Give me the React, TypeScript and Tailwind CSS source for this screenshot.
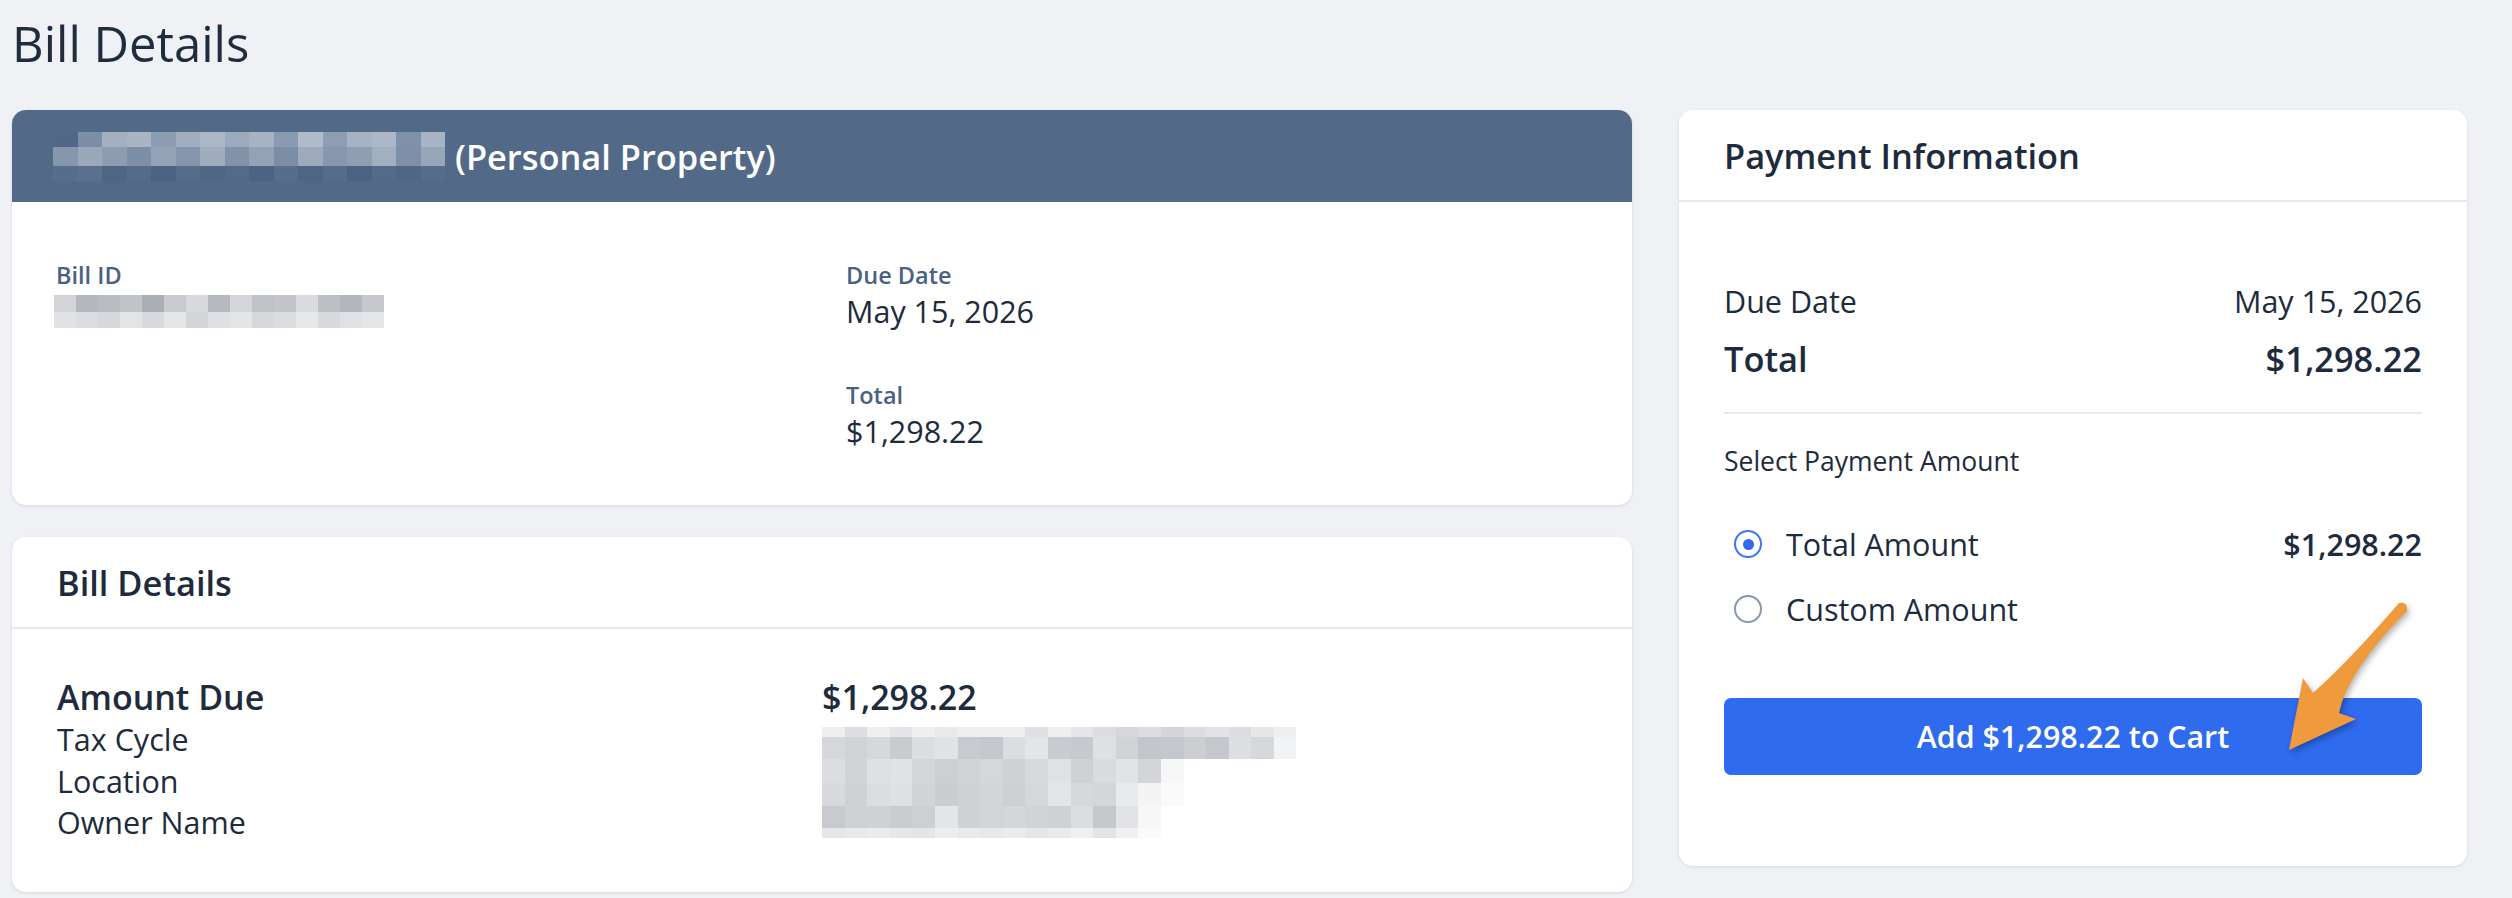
import React from "react";

const font = { fontFamily: '"Open Sans", "Noto Sans", sans-serif' };

function Blur({
  rows,
  cell,
  cellH,
}: {
  rows: string[][];
  cell: number;
  cellH: number[];
}) {
  return (
    <div className="flex flex-col">
      {rows.map((r, i) => (
        <div key={i} className="flex">
          {r.map((c, j) => (
            <div key={j} style={{ width: cell, height: cellH[i], background: c }} />
          ))}
        </div>
      ))}
    </div>
  );
}

const headerBlur = [
  ["#51688a", "#7d8fa6", "#a3b0c1", "#a9b5c5", "#8c9cb1", "#a1aec0", "#abb7c6", "#9babbd", "#a7b3c3", "#8a9ab0", "#b0bbc9", "#8e9db2", "#a7b3c4", "#acb8c7", "#7f91a8", "#a8b4c4"],
  ["#8597ad", "#9aa8ba", "#8c9cb1", "#7d8fa7", "#94a3b7", "#8495ac", "#9fadbf", "#8192a9", "#93a2b6", "#7c8ea6", "#9caabc", "#8797ad", "#8f9eb3", "#a2afc0", "#7e90a7", "#98a6b9"],
  ["#566d8b", "#5a708d", "#4e6584", "#546b89", "#4b6282", "#566c8a", "#4f6685", "#536a88", "#4c6383", "#576d8b", "#4e6584", "#556c8a", "#4b6282", "#536a88", "#4f6685", "#566c8a"],
];

const billIdBlur = [
  ["#d2d4d8", "#b4b7bd", "#b9bcc2", "#c0c3c8", "#a9adb4", "#c8cacf", "#d9dadd", "#b6b9bf", "#d5d6da", "#bfc2c7", "#c3c5ca", "#dadbde", "#bcbfc4", "#b3b6bc", "#c6c8cd"],
  ["#e1e2e5", "#dcdde0", "#d6d8db", "#e3e4e6", "#d9dadd", "#e6e7e9", "#d2d4d7", "#dfe0e3", "#e4e5e7", "#d5d7da", "#dbdcdf", "#e7e8ea", "#d8d9dc", "#e0e1e4", "#e5e6e8"],
];

const detailsBlur1 = [
  ["#eceef0", "#dcdee1", "#eeeff1", "#e4e5e8", "#eeeff1", "#e8e9eb", "#eeeff1", "#eceef0", "#eeeff1", "#dfe0e3", "#eeeff1", "#e5e6e9", "#dcdde0", "#d6d7db", "#dcdde0", "#d3d5d8", "#dcdde0", "#e2e3e6", "#dcdde0", "#e6e7e9", "#eeeff1"],
  ["#d5d7da", "#d1d3d7", "#d6d8db", "#c9cbcf", "#dcdde0", "#e1e2e5", "#c8cacf", "#c5c8cc", "#dcdde0", "#e4e5e8", "#c9cbd0", "#c6c9cd", "#dfe0e3", "#d1d3d7", "#c3c6cb", "#c4c7cb", "#ccced2", "#c5c7cc", "#dedfe2", "#d6d8db", "#f2f3f4"],
];
const detailsBlur2 = [
  ["#dcdde0", "#d1d3d7", "#dfe0e3", "#e1e2e5", "#d4d6d9", "#cdcfd3", "#d1d3d7", "#d5d7da", "#cfd1d5", "#d8d9dc", "#e0e1e4", "#cfd1d5", "#dadbde", "#e2e3e6", "#d3d5d8", "#f6f6f7"],
  ["#d8d9dc", "#cfd1d5", "#dcdde0", "#dfe0e3", "#d1d3d7", "#cbcdd1", "#cfd1d5", "#d2d4d7", "#cdcfd3", "#d5d7da", "#e4e5e8", "#d6d8db", "#d4d6d9", "#e9eaec", "#f4f4f5", "#fafafa"],
];
const detailsBlur3 = [
  ["#c8cacf", "#cfd1d5", "#d0d2d6", "#caccd0", "#cdcfd3", "#e4e5e7", "#cfd1d5", "#d2d4d7", "#d5d6da", "#d1d3d7", "#cfd1d5", "#dcdde0", "#c6c8cd", "#e2e3e5", "#f7f7f8"],
  ["#e6e7e9", "#e8e9eb", "#eaebed", "#e6e7e9", "#e4e5e7", "#ecedef", "#e9eaec", "#e7e8ea", "#ebeced", "#e6e7e9", "#e9eaec", "#eeeff0", "#e3e4e6", "#f0f0f2", "#fafafa"],
];

export default function App() {
  return (
    <div
      className="relative w-[2512px] h-[898px] overflow-hidden bg-[#eff1f5] px-[12px] text-[#1e2b3c]"
      style={font}
    >
      <div className="pt-[10px] text-[49px] leading-[66px] text-[#1f2c3d]">Bill Details</div>

      <div className="mt-[34px] flex items-start gap-[47px]">
        {/* Left column */}
        <div className="flex w-[1620px] flex-col gap-[32px]">
          {/* Card 1 */}
          <div className="overflow-hidden rounded-[14px] bg-white shadow-[0_1px_3px_rgba(30,40,60,0.12)]">
            <div className="flex h-[92px] items-center bg-[#526a87] pl-[41px]">
              <Blur rows={headerBlur} cell={24.5} cellH={[15, 19, 15]} />
              <span className="ml-[10px] text-[34.4px] font-semibold leading-[45px] text-white">
                (Personal Property)
              </span>
            </div>
            <div className="grid grid-cols-2 gap-[48px] px-[44px] pb-[54px] pt-[57px]">
              <div className="flex flex-col">
                <div className="text-[23.5px] font-semibold leading-[32px] text-[#4a6184]">Bill ID</div>
                <div className="mt-[4px] -ml-[2px]">
                  <Blur rows={billIdBlur} cell={22} cellH={[17, 16]} />
                </div>
              </div>
              <div className="flex flex-col">
                <div className="text-[23.5px] font-semibold leading-[32px] text-[#4a6184]">Due Date</div>
                <div className="text-[30.5px] leading-[40px]">May 15, 2026</div>
                <div className="mt-[48px] text-[23.5px] font-semibold leading-[32px] text-[#4a6184]">Total</div>
                <div className="text-[30.5px] leading-[40px]">$1,298.22</div>
              </div>
            </div>
          </div>

          {/* Card 2 */}
          <div className="overflow-hidden rounded-[14px] bg-white shadow-[0_1px_3px_rgba(30,40,60,0.12)]">
            <div className="flex h-[92px] items-center border-b-2 border-[#e6e9ef] px-[45px]">
              <span className="text-[34.4px] font-semibold leading-[45px]">Bill Details</span>
            </div>
            <div className="grid grid-cols-2 px-[45px] pb-[48px] pt-[46px]">
              <div className="flex flex-col">
                <div className="text-[34px] font-semibold leading-[44px]">Amount Due</div>
                <div className="text-[30.5px] leading-[41.5px]">Tax Cycle</div>
                <div className="text-[30.5px] leading-[41.5px]">Location</div>
                <div className="text-[30.5px] leading-[41.5px]">Owner Name</div>
              </div>
              <div className="flex flex-col">
                <div className="text-[34px] font-semibold leading-[44px]">$1,298.22</div>
                <div className="mt-[8px]">
                  <Blur rows={detailsBlur1} cell={22.6} cellH={[10, 22]} />
                  <Blur rows={detailsBlur2} cell={22.6} cellH={[24, 23]} />
                  <Blur rows={detailsBlur3} cell={22.6} cellH={[22, 10]} />
                </div>
              </div>
            </div>
          </div>
        </div>

        {/* Right card */}
        <div className="w-[788px] overflow-hidden rounded-[14px] bg-white shadow-[0_1px_3px_rgba(30,40,60,0.12)]">
          <div className="flex h-[92px] items-center border-b-2 border-[#e6e9ef] px-[45px]">
            <span className="text-[34.4px] font-semibold leading-[45px]">Payment Information</span>
          </div>
          <div className="flex flex-col px-[45px] pb-[91px] pt-[79px]">
            <div className="flex justify-between text-[30.5px] leading-[40px]">
              <span>Due Date</span>
              <span>May 15, 2026</span>
            </div>
            <div className="mt-[16px] flex justify-between text-[34.4px] font-semibold leading-[44px]">
              <span>Total</span>
              <span>$1,298.22</span>
            </div>
            <div className="mt-[31px] h-[2px] bg-[#e6e9ef]" />
            <div className="mt-[30px] text-[26.5px] leading-[34px]">Select Payment Amount</div>
            <div className="mt-[46px] flex items-center justify-between">
              <div className="flex items-center">
                <div className="ml-[10px] flex h-[28px] w-[28px] items-center justify-center rounded-full border-[2.5px] border-[#3b76f6]">
                  <div className="h-[11px] w-[11px] rounded-full bg-[#2f6bef]" />
                </div>
                <span className="ml-[24px] text-[30.5px] leading-[40px]">Total Amount</span>
              </div>
              <span className="text-[30.5px] font-semibold leading-[40px]">$1,298.22</span>
            </div>
            <div className="mt-[25px] flex items-center">
              <div className="ml-[10px] h-[28px] w-[28px] rounded-full border-2 border-[#8797b0]" />
              <span className="ml-[24px] text-[30.5px] leading-[40px]">Custom Amount</span>
            </div>
            <button className="mt-[69px] flex h-[77px] items-center justify-center rounded-[7px] bg-[#2f6bef] text-[30.4px] font-semibold text-white">
              Add $1,298.22 to Cart
            </button>
          </div>
        </div>
      </div>

      {/* Orange annotation arrow */}
      <svg
        className="absolute left-[2270px] top-[590px] drop-shadow-[2px_3px_3px_rgba(0,0,0,0.3)]"
        width="160"
        height="180"
        viewBox="0 0 160 180"
      >
        <path
          d="M 129 13 Q 80 70 43 103 L 33 88 L 19 160 L 86 129 L 69 123 Q 78 80 137 21 Q 138 11 129 13 Z"
          fill="#f09a3e"
        />
      </svg>
    </div>
  );
}
